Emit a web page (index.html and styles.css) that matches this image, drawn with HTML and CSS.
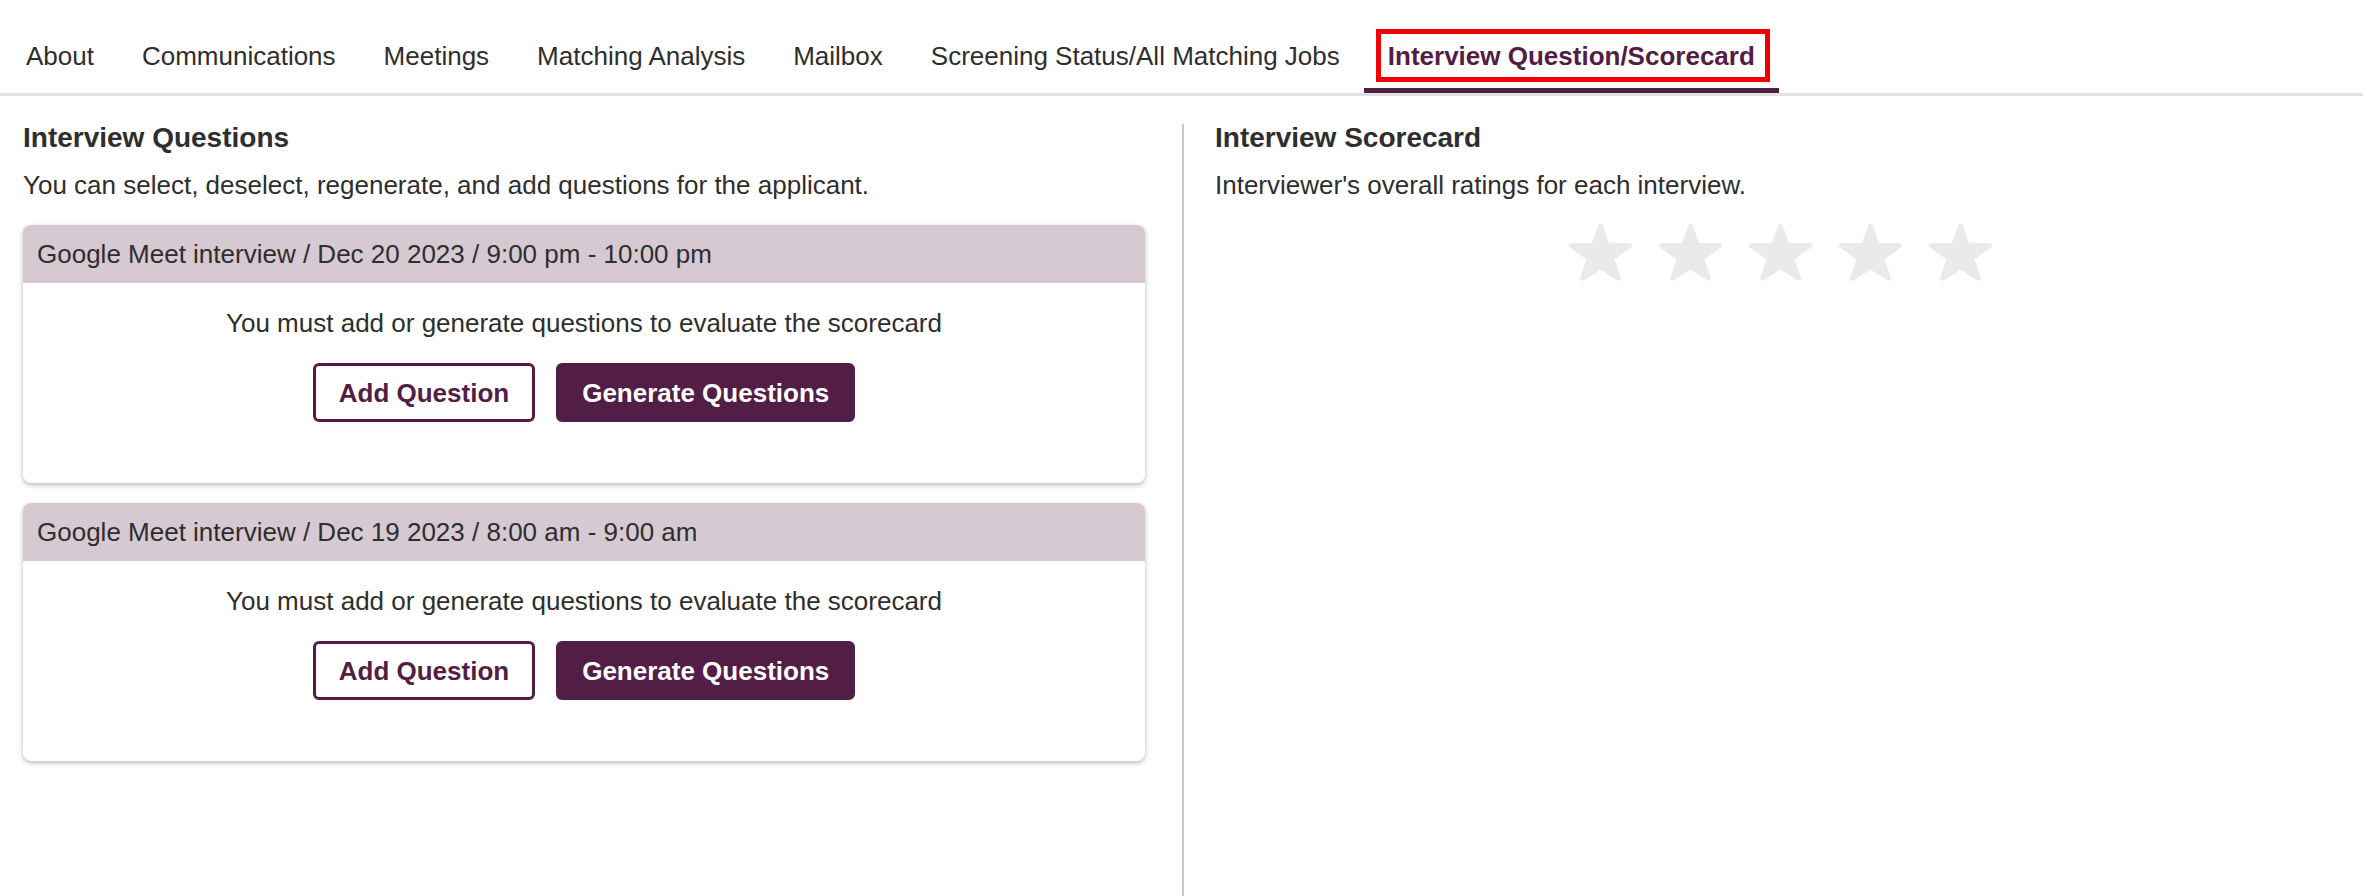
FILE: index.html
```html
<!DOCTYPE html>
<html lang="en">
<head>
<meta charset="utf-8">
<title>Interview Question/Scorecard</title>
<link rel="stylesheet" href="styles.css">
</head>
<body>
<nav class="tabs">
  <a class="tab">About</a>
  <a class="tab">Communications</a>
  <a class="tab">Meetings</a>
  <a class="tab">Matching Analysis</a>
  <a class="tab">Mailbox</a>
  <a class="tab">Screening Status/All Matching Jobs</a>
  <a class="tab tab-active"><span class="highlight">Interview Question/Scorecard</span></a>
</nav>
<main class="columns">
  <section class="col-left">
    <h2 class="section-title">Interview Questions</h2>
    <p class="section-sub">You can select, deselect, regenerate, and add questions for the applicant.</p>
    <div class="card">
      <div class="card-head">Google Meet interview / Dec 20 2023 / 9:00 pm - 10:00 pm</div>
      <div class="card-body">
        <p class="card-msg">You must add or generate questions to evaluate the scorecard</p>
        <div class="btn-row">
          <button class="btn btn-outline">Add Question</button>
          <button class="btn btn-solid">Generate Questions</button>
        </div>
      </div>
    </div>
    <div class="card">
      <div class="card-head">Google Meet interview / Dec 19 2023 / 8:00 am - 9:00 am</div>
      <div class="card-body">
        <p class="card-msg">You must add or generate questions to evaluate the scorecard</p>
        <div class="btn-row">
          <button class="btn btn-outline">Add Question</button>
          <button class="btn btn-solid">Generate Questions</button>
        </div>
      </div>
    </div>
  </section>
  <section class="col-right">
    <h2 class="section-title">Interview Scorecard</h2>
    <p class="section-sub">Interviewer's overall ratings for each interview.</p>
    <div class="stars">
      <svg class="star" viewBox="0 0 64 60"><polygon points="32,4 38.96,23.42 61.48,23.42 43.26,36.66 50.22,56.5 32,44.84 13.78,56.5 20.74,36.66 2.52,23.42 25.04,23.42"/></svg>
      <svg class="star" viewBox="0 0 64 60"><polygon points="32,4 38.96,23.42 61.48,23.42 43.26,36.66 50.22,56.5 32,44.84 13.78,56.5 20.74,36.66 2.52,23.42 25.04,23.42"/></svg>
      <svg class="star" viewBox="0 0 64 60"><polygon points="32,4 38.96,23.42 61.48,23.42 43.26,36.66 50.22,56.5 32,44.84 13.78,56.5 20.74,36.66 2.52,23.42 25.04,23.42"/></svg>
      <svg class="star" viewBox="0 0 64 60"><polygon points="32,4 38.96,23.42 61.48,23.42 43.26,36.66 50.22,56.5 32,44.84 13.78,56.5 20.74,36.66 2.52,23.42 25.04,23.42"/></svg>
      <svg class="star" viewBox="0 0 64 60"><polygon points="32,4 38.96,23.42 61.48,23.42 43.26,36.66 50.22,56.5 32,44.84 13.78,56.5 20.74,36.66 2.52,23.42 25.04,23.42"/></svg>
    </div>
  </section>
</main>
</body>
</html>
```
FILE: styles.css
```css
* { box-sizing: border-box; }

html, body {
  margin: 0;
  padding: 0;
  background: #ffffff;
}

body {
  font-family: "Liberation Sans", Arial, Helvetica, sans-serif;
  font-size: 26px;
  line-height: 30px;
  color: #2e2e2e;
  overflow: hidden;
}

.tabs {
  display: flex;
  margin: 0 13px 0 0;
  padding-left: 2px;
  border-bottom: 3px solid #e2e2e2;
}

.tab {
  display: block;
  padding: 41px 24px 17px;
  border-bottom: 5px solid transparent;
  color: #2e2e2e;
  white-space: nowrap;
  text-decoration: none;
}

.tab-active {
  border-bottom-color: #521e45;
  color: #521e45;
  font-weight: bold;
}

.highlight {
  border: 5px solid #f00000;
  padding: 7px 10px 6px 7px;
  margin: 0 -15px 0 -12px;
}

.columns {
  display: flex;
  margin-top: 28px;
  height: calc(100vh - 124px);
}

.col-left {
  width: 1182px;
  flex: none;
  padding: 0 37px 0 23px;
}

.col-right {
  flex: 1;
  border-left: 2px solid #c6c6c6;
  padding: 0 31px;
}

.section-title {
  margin: 0 0 18px;
  font-size: 28px;
  line-height: 28px;
  font-weight: bold;
  color: #2e2e2e;
}

.section-sub {
  margin: 0;
}

.card {
  margin-top: 25px;
  border-radius: 8px;
  background: #ffffff;
  box-shadow: 0 2px 5px rgba(0, 0, 0, 0.28);
  overflow: hidden;
}

.card + .card {
  margin-top: 20px;
}

.card-head {
  background: #d6c9d1;
  padding: 14px 14px;
  height: 58px;
}

.card-body {
  padding: 25px 20px 61px;
  text-align: center;
}

.card-msg {
  margin: 0 0 25px;
}

.btn-row {
  display: flex;
  justify-content: center;
  gap: 21px;
}

.btn {
  height: 59px;
  padding: 0 23px;
  border: 3px solid #521e45;
  border-radius: 6px;
  font-family: "Liberation Sans", Arial, Helvetica, sans-serif;
  font-size: 26px;
  font-weight: bold;
  line-height: 30px;
  cursor: pointer;
}

.btn-outline {
  background: #ffffff;
  color: #521e45;
}

.btn-solid {
  background: #521e45;
  color: #ffffff;
}

.stars {
  display: flex;
  justify-content: center;
  gap: 27px;
  margin-top: 22px;
}

.star {
  width: 63px;
  height: 60px;
  display: block;
}

.star polygon {
  fill: #e9eaeb;
  stroke: #e9eaeb;
  stroke-width: 5;
  stroke-linejoin: round;
}
```
